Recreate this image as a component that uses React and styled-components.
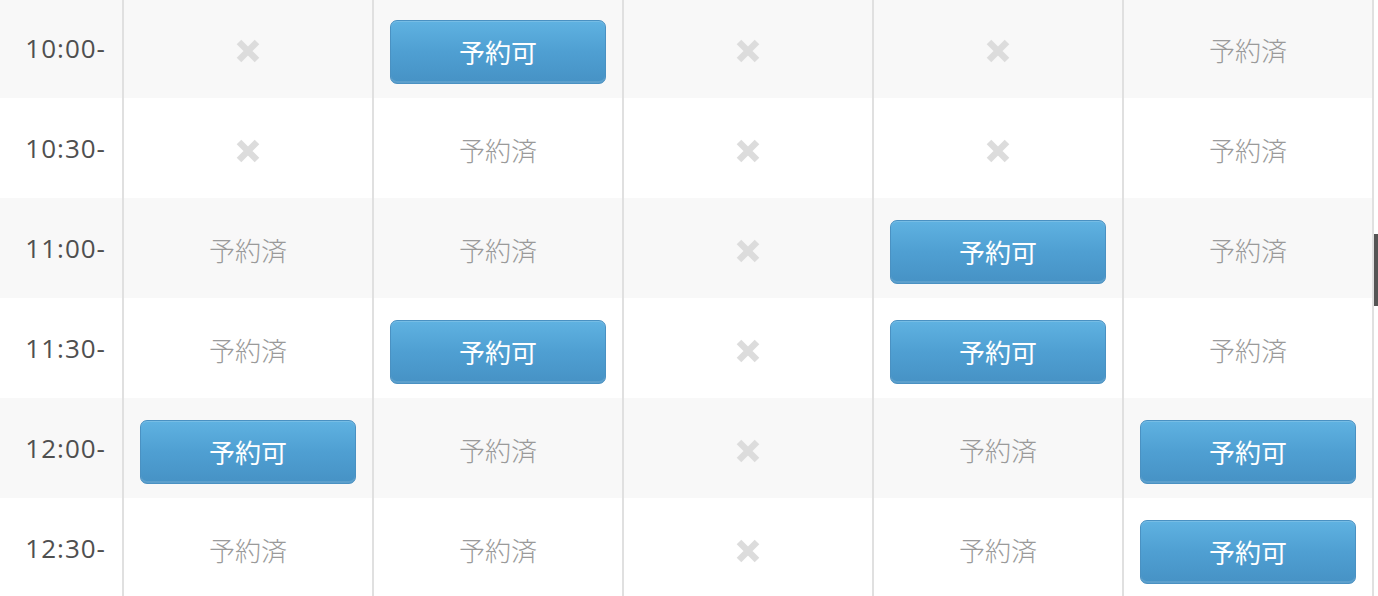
import React from 'react';
import styled, { createGlobalStyle } from 'styled-components';

const GlobalStyle = createGlobalStyle`
  html, body {
    margin: 0;
    padding: 0;
    background: #fff;
    overflow: hidden;
  }
  body {
    font-family: 'Noto Sans CJK JP', 'Noto Sans', sans-serif;
  }
`;

const Page = styled.div`
  position: relative;
  width: 1378px;
  height: 596px;
  overflow: hidden;
`;

const Table = styled.div`
  margin-top: -2px;
  width: 1374px;
  display: grid;
  grid-template-columns: 122px repeat(5, 250px) 2px;
  grid-auto-rows: 100px;
  border-bottom: 2px solid #e0e0e0;
`;

const Row = styled.div`
  display: contents;
`;

const TimeCell = styled.div`
  display: flex;
  align-items: center;
  justify-content: flex-end;
  padding-right: 16px;
  font-family: 'Open Sans', 'Noto Sans', sans-serif;
  font-size: 26px;
  letter-spacing: 1px;
  color: #4f4f4f;
  background: ${(p) => (p.striped ? '#f8f8f8' : '#fff')};
`;

const Cell = styled.div`
  display: flex;
  align-items: center;
  justify-content: center;
  border-left: 2px solid #e0e0e0;
  padding: 0 16px;
  background: ${(p) => (p.striped ? '#f8f8f8' : '#fff')};
`;

const EdgeCell = styled.div`
  background: #e0e0e0;
`;

const Booked = styled.span`
  font-size: 26px;
  font-weight: 300;
  color: #9a9a9a;
  margin-top: 2px;
`;

const ReserveButton = styled.button`
  width: 216px;
  height: 64px;
  margin-top: 7px;
  border: 1px solid #4a91c2;
  border-radius: 7px;
  background: linear-gradient(to bottom, #5fb2e1 0%, #4f9fd2 50%, #4692c5 100%);
  box-shadow: inset 0 -2px 0 rgba(255, 255, 255, 0.12), inset 0 1px 0 rgba(255, 255, 255, 0.15);
  color: #fff;
  font-family: 'Noto Sans CJK JP', sans-serif;
  font-size: 26px;
  padding: 0;
  cursor: pointer;
`;

const Cross = styled.svg`
  width: 26px;
  height: 26px;
  margin-top: 6px;
`;

const Scrollbar = styled.div`
  position: absolute;
  right: 0;
  top: 234px;
  width: 4px;
  height: 72px;
  background: #555;
`;

const NoSlot = () => (
  <Cross viewBox="0 0 26 26">
    <path d="M4 4 L22 22 M22 4 L4 22" stroke="#dcdcdc" strokeWidth="6.5" strokeLinecap="butt" fill="none" />
  </Cross>
);

const rows = [
  ['10:00-', ['x', 'open', 'x', 'x', 'booked']],
  ['10:30-', ['x', 'booked', 'x', 'x', 'booked']],
  ['11:00-', ['booked', 'booked', 'x', 'open', 'booked']],
  ['11:30-', ['booked', 'open', 'x', 'open', 'booked']],
  ['12:00-', ['open', 'booked', 'x', 'booked', 'open']],
  ['12:30-', ['booked', 'booked', 'x', 'booked', 'open']],
];

const Slot = ({ state }) => {
  if (state === 'open') return <ReserveButton>予約可</ReserveButton>;
  if (state === 'booked') return <Booked>予約済</Booked>;
  return <NoSlot />;
};

export default function App() {
  return (
    <Page>
      <GlobalStyle />
      <Table>
        {rows.map(([time, slots], i) => (
          <Row key={time}>
            <TimeCell striped={i % 2 === 0}>{time}</TimeCell>
            {slots.map((s, j) => (
              <Cell key={j} striped={i % 2 === 0}>
                <Slot state={s} />
              </Cell>
            ))}
            <EdgeCell />
          </Row>
        ))}
      </Table>
      <Scrollbar />
    </Page>
  );
}
